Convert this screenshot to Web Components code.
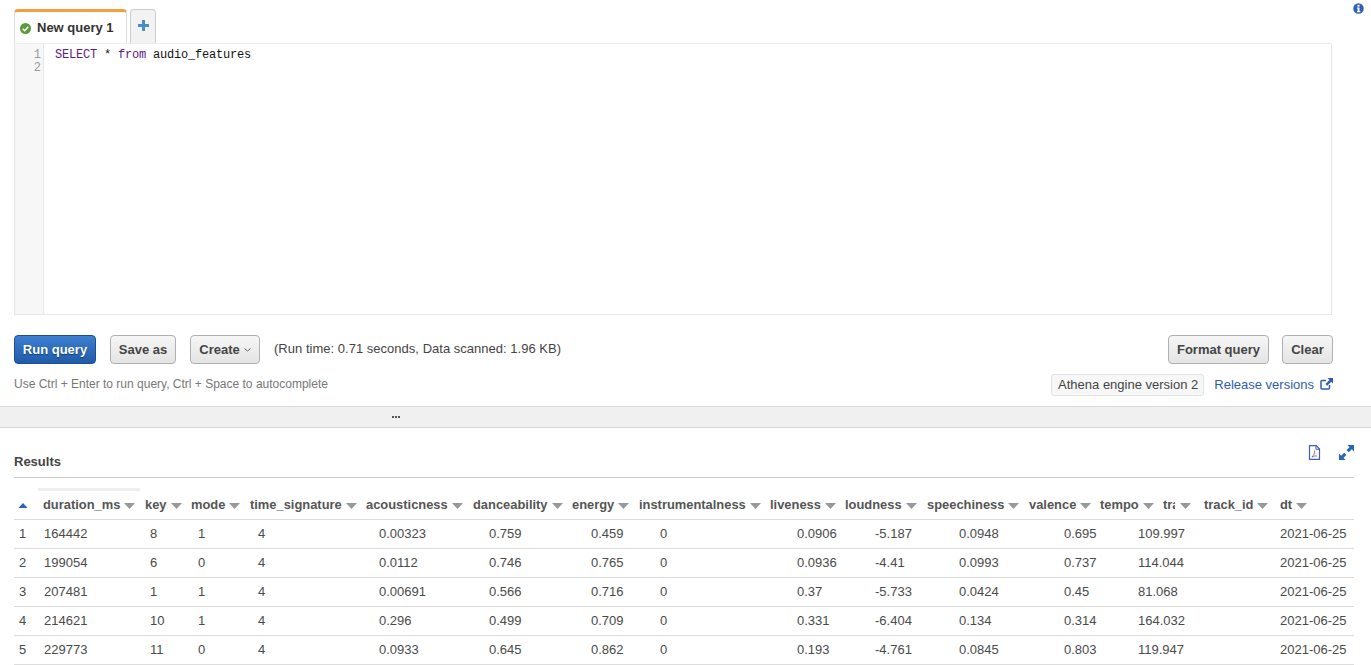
<!DOCTYPE html>
<html lang="en"><head><meta charset="utf-8"><title>Athena query</title>
<style>
html,body{margin:0;padding:0;background:#fff;overflow:hidden}
body{font:13px "Liberation Sans",Arial,sans-serif;color:#444;width:1371px;height:665px}
</style></head><body>
<athena-app></athena-app>
<script>
function def(name, html){
  customElements.define(name, class extends HTMLElement{
    constructor(){super();const r=this.attachShadow({mode:'open'});r.innerHTML=typeof html==='function'?html(this):html;}
  });
}
def('query-tabs',`<style>
:host{display:flex;align-items:flex-end;height:43px;padding:0 7px 0 14px;box-sizing:border-box}
.tab{box-sizing:border-box;height:34px;background:#fff;border:1px solid #ddd;border-bottom:0;border-top:3px solid #f49e3f;border-radius:4px 4px 0 0;width:113px;display:flex;align-items:center;padding:0 0 0 5px;gap:6px;font:bold 13px "Liberation Sans",sans-serif;color:#333;white-space:nowrap}
.tab svg{margin-top:2px}
.add{box-sizing:border-box;width:26px;height:34px;margin-left:3px;background:#f2f2f2;border:1px solid #ccc;border-bottom:0;border-radius:4px 4px 0 0;display:flex;align-items:center;justify-content:center;padding-bottom:2px}
.sp{flex:1}
.info{align-self:flex-start;margin-top:3px;display:block}
</style>
<div class="tab"><svg width="11" height="11" viewBox="0 0 12 12"><circle cx="6" cy="6" r="6" fill="#5b9a3c"/><path d="M3 6.200l2.100 2.200L9 4" fill="none" stroke="#fff" stroke-width="1.700"/></svg><span>New query 1</span></div>
<div class="add"><svg width="11" height="11" viewBox="0 0 11 11"><path d="M5.500 0v11M0 5.500h11" stroke="#4a8cc4" stroke-width="3"/></svg></div>
<div class="sp"></div>
<svg class="info" width="11" height="11" viewBox="0 0 12 12"><circle cx="6" cy="6" r="5.700" fill="#2f60b5"/><rect x="4.900" y="2" width="2.200" height="2" fill="#fff"/><path d="M4.200 5h2.900v4h.9v1H4.200V9h.8V6h-.8z" fill="#fff"/></svg>`);
def('sql-editor',`<style>
:host{display:flex;box-sizing:border-box;height:272px;margin:0 39px 0 14px;border:1px solid #e8e8e8;border-top-color:#eee;font:12px/12px "Liberation Mono",monospace}
.g{box-sizing:border-box;width:29px;background:#f7f7f7;border-right:1px solid #e6e6e6;color:#999;text-align:right;padding:5px 2px 0 0;line-height:13px;height:100%}
.c{padding:5px 0 0 11px;color:#111;letter-spacing:-.2px;white-space:pre}
.k{color:#5a1a86}
</style>
<div class="g">1<br>2</div><div class="c"><span class="k">SELECT</span> * <span class="k">from</span> audio_features</div>`);
def('aws-button',`<style>
:host{display:inline-flex;align-items:center;justify-content:center;box-sizing:border-box;height:29px;border:1px solid #b0b0b0;border-radius:4px;background:linear-gradient(#f6f6f6,#e4e4e4);font:bold 13px "Liberation Sans",sans-serif;color:#444;white-space:nowrap;gap:4px;flex:none}
:host([primary]){background:linear-gradient(#3d7fd0,#1f5ba8);border-color:#1d4f8e;color:#fff;text-shadow:0 1px 1px #123a70}
</style><slot></slot>`);
def('query-toolbar',`<style>
:host{display:block;padding:20px 38px 0 14px}
.r1{display:flex;align-items:center;height:29px}
.m{margin-left:14px;font-size:13px;color:#444;margin-top:-2px;letter-spacing:.02px}
.sp{flex:1}
.r2{display:flex;align-items:center;height:24px;margin-top:9px}
.hint{font-size:12px;color:#777;margin-top:-2px}
.pill{box-sizing:border-box;height:22px;line-height:20px;border:1px solid #e2e2e2;border-radius:3px;background:#f7f7f7;padding:0 5px 0 6px;font-size:13px;color:#444;margin-right:11px}
a{color:#2f5dac;font-size:13px;text-decoration:none;margin-top:-2px;margin-left:-1px}
.ext{margin-left:6px;display:block;margin-top:-2px}
</style>
<div class="r1"><aws-button primary style="width:82px">Run query</aws-button><aws-button style="width:66px;margin-left:14px">Save as</aws-button><aws-button style="width:70px;margin-left:14px">Create <svg width="7" height="4" viewBox="0 0 7 4"><path d="M.5.5l3 2.500 3-2.500" fill="none" stroke="#666"/></svg></aws-button><span class="m">(Run time: 0.71 seconds, Data scanned: 1.96 KB)</span><span class="sp"></span><aws-button style="width:101px">Format query</aws-button><aws-button style="width:51px;margin-left:13px">Clear</aws-button></div>
<div class="r2"><span class="hint">Use Ctrl + Enter to run query, Ctrl + Space to autocomplete</span><span class="sp"></span><span class="pill">Athena engine version 2</span><a href="#">Release versions</a><svg class="ext" width="13" height="12" viewBox="0 0 13 12"><path d="M9.500 7v3a1 1 0 0 1-1 1H2a1 1 0 0 1-1-1V3.500a1 1 0 0 1 1-1h4" fill="none" stroke="#2f5dac" stroke-width="1.500"/><path d="M7.500 0H13v5.500l-1.800-1.800-4 4-1.700-1.700 4-4z" fill="#2f5dac"/></svg></div>`);
def('pane-splitter',`<style>
:host{display:flex;box-sizing:border-box;height:22px;margin-top:9px;background:#f0f0f0;border-top:1px solid #d8d8d8;border-bottom:1px solid #d8d8d8;align-items:center;justify-content:center;padding-right:579px}
i{display:block;width:2px;height:2px;background:#555;margin:0 .5px}
</style><i></i><i></i><i></i>`);
const cols=[[29,5],[102,1],[46,5],[59,7],[116,8],[107,13],[99,16],[67,19],[131,21],[75,27],[82,30],[102,32],[71,35],[63,38],[41,0],[76,0],[74,0]];
const heads=['duration_ms','key','mode','time_signature','acousticness','danceability','energy','instrumentalness','liveness','loudness','speechiness','valence','tempo','tra','track_id','dt'];
const rows=[
[1,164442,8,1,4,'0.00323','0.759','0.459',0,'0.0906','-5.187','0.0948','0.695','109.997','','','2021-06-25'],
[2,199054,6,0,4,'0.0112','0.746','0.765',0,'0.0936','-4.41','0.0993','0.737','114.044','','','2021-06-25'],
[3,207481,1,1,4,'0.00691','0.566','0.716',0,'0.37','-5.733','0.0424','0.45','81.068','','','2021-06-25'],
[4,214621,10,1,4,'0.296','0.499','0.709',0,'0.331','-6.404','0.134','0.314','164.032','','','2021-06-25'],
[5,229773,11,0,4,'0.0933','0.645','0.862',0,'0.193','-4.761','0.0845','0.803','119.947','','','2021-06-25']];
def('results-table',()=>{
 const arrow='<svg class="a" width="11" height="6" viewBox="0 0 11 6"><path d="M0 0h11L5.500 6z" fill="#999"/></svg>';
 let h=`<style>
:host{display:block;margin:0 17px 0 14px;font-size:13px;color:#4a4a4a}
.grid{display:grid;grid-template-columns:${cols.map(c=>c[0]+'px').join(' ')};grid-template-rows:42px repeat(5,29px)}
.hc{box-sizing:border-box;display:flex;align-items:flex-end;padding-bottom:6px;font:bold 12.9px/16px "Liberation Sans",sans-serif;color:#555;border-bottom:1px solid #ddd;white-space:nowrap;position:relative;gap:4px}
.hc span{display:block}
.first{padding:0 0 11px 4px}
.d{box-sizing:border-box;border-bottom:1px solid #ddd;display:flex;align-items:center;white-space:nowrap;padding-bottom:1px}
.a{flex:none;margin-bottom:4px}
.grip{position:absolute;left:-5px;top:10px;width:102px;height:3px;background:#eee}
.tra{width:12px;overflow:hidden;margin-right:1px}
</style><div class="grid">`;
 h+=`<div class="hc first"><svg width="10" height="5" viewBox="0 0 11 6"><path d="M0 6h11L5.500 0z" fill="#2f60b5"/></svg></div>`;
 heads.forEach((t,i)=>{h+=`<div class="hc">${i==0?'<div class="grip"></div>':''}<span${t=='tra'?' class="tra"':''}>${t}</span>${arrow}</div>`;});
 rows.forEach(r=>r.forEach((v,i)=>{h+=`<div class="d" style="padding-left:${cols[i][1]}px"><span>${v}</span></div>`;}));
 return h+'</div>';
});
def('results-panel',`<style>
:host{display:block}
.t{display:flex;align-items:flex-end;margin:0 17px 0 14px;height:50px;border-bottom:1px solid #ccc;box-sizing:border-box;padding-bottom:8px;font:bold 13px "Liberation Sans",sans-serif;color:#444;position:relative}
.ic{position:absolute;display:block}
</style>
<div class="t"><span>Results</span>
<svg class="ic" style="right:33px;top:17px" width="13" height="15" viewBox="0 0 13 15"><path d="M1.500.7h6.800l3.200 3.300v10.300h-10z" fill="#fff" stroke="#3e5fb5" stroke-width="1.200"/><path d="M8 .7V4.300h3.500" fill="none" stroke="#3e5fb5"/><path d="M6.500 5.500c.5 3-1 5-2.500 6.500 2-.9 3.500-1.200 5-1" fill="none" stroke="#8a5a9a" stroke-width=".9"/></svg>
<svg class="ic" style="right:0;top:17px" width="15" height="15" viewBox="0 0 15 15"><path d="M8.500 0H15v6.500l-2.200-2.200-3 3L7.500 5l3-2.800zM6.500 15H0V8.500l2.200 2.200 3-3L7.500 10l-3 2.800z" fill="#2a66b8"/></svg>
</div><results-table></results-table>`);
def('athena-app',`<style>:host{display:block;width:1371px;height:665px;overflow:hidden}</style>
<query-tabs></query-tabs><sql-editor></sql-editor><query-toolbar></query-toolbar><pane-splitter></pane-splitter><results-panel></results-panel>`);
</script>
</body></html>
